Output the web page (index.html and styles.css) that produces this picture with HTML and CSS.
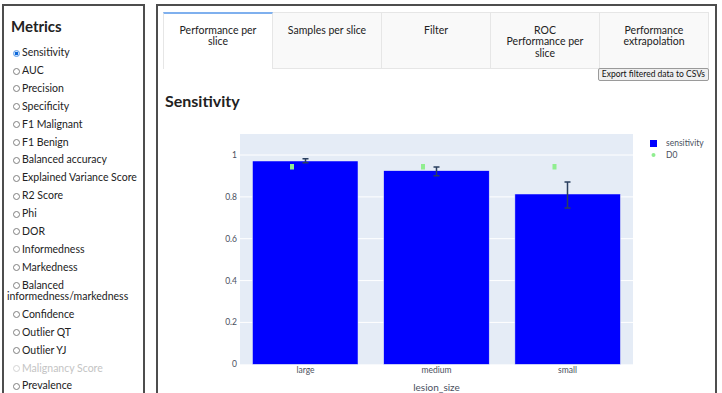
FILE: index.html
```html
<!DOCTYPE html>
<html lang="en">
<head>
    <meta charset="UTF-8">
    <meta name="viewport" content="width=device-width, initial-scale=1.0">
    <title>Slice performance</title>
    <link rel="stylesheet" href="styles.css">
</head>
<body>
    <div class="sidebar">
        <h2>Metrics</h2>
        <form class="metrics">
            <label><input type="radio" name="metric" checked>Sensitivity</label>
            <label><input type="radio" name="metric">AUC</label>
            <label><input type="radio" name="metric">Precision</label>
            <label><input type="radio" name="metric">Specificity</label>
            <label><input type="radio" name="metric">F1 Malignant</label>
            <label><input type="radio" name="metric">F1 Benign</label>
            <label><input type="radio" name="metric">Balanced accuracy</label>
            <label><input type="radio" name="metric">Explained Variance Score</label>
            <label><input type="radio" name="metric">R2 Score</label>
            <label><input type="radio" name="metric">Phi</label>
            <label><input type="radio" name="metric">DOR</label>
            <label><input type="radio" name="metric">Informedness</label>
            <label><input type="radio" name="metric">Markedness</label>
            <label><input type="radio" name="metric">Balanced informedness/markedness</label>
            <label><input type="radio" name="metric">Confidence</label>
            <label><input type="radio" name="metric">Outlier QT</label>
            <label><input type="radio" name="metric">Outlier YJ</label>
            <label class="disabled"><input type="radio" name="metric" disabled>Malignancy Score</label>
            <label><input type="radio" name="metric">Prevalence</label>
        </form>
    </div>

    <div class="main">
        <div class="tabs">
            <div class="tab selected">Performance per slice</div>
            <div class="tab">Samples per slice</div>
            <div class="tab">Filter</div>
            <div class="tab">ROC<br>Performance per slice</div>
            <div class="tab">Performance extrapolation</div>
        </div>
        <div class="export-row">
            <button type="button">Export filtered data to CSVs</button>
        </div>

        <h3>Sensitivity</h3>

        <!-- bar chart, drawn in page coordinates -->
        <svg class="chart" width="546" height="280" viewBox="163 118 546 280">
            <rect x="240" y="134" width="393" height="230.3" fill="#e5ecf6"/>
            <g stroke="#fff" stroke-width="1">
                <line x1="240" x2="633" y1="155" y2="155"/>
                <line x1="240" x2="633" y1="196.9" y2="196.9"/>
                <line x1="240" x2="633" y1="238.7" y2="238.7"/>
                <line x1="240" x2="633" y1="280.6" y2="280.6"/>
                <line x1="240" x2="633" y1="322.4" y2="322.4"/>
            </g>
            <g class="tick" text-anchor="end">
                <text x="237" y="155" dy=".35em">1</text>
                <text x="237" y="196.9" dy=".35em">0.8</text>
                <text x="237" y="238.7" dy=".35em">0.6</text>
                <text x="237" y="280.6" dy=".35em">0.4</text>
                <text x="237" y="322.4" dy=".35em">0.2</text>
                <text x="237" y="364.3" dy=".35em">0</text>
            </g>
            <g fill="#0000ff" stroke="#e5ecf6" stroke-width="0.5">
                <rect x="252.5" y="161" width="105.5" height="203.3"/>
                <rect x="383.7" y="170.7" width="105.5" height="193.6"/>
                <rect x="514.9" y="194" width="105.5" height="170.3"/>
            </g>
            <g stroke="#2a3f5f" stroke-width="1.5" fill="none">
                <path d="M305.5 158.7V162.7M302.5 158.7H308.5M302.5 162.7H308.5"/>
                <path d="M436.5 167V175.7M433.5 167H439.5M433.5 175.7H439.5"/>
                <path d="M567.5 182V208M564.5 182H570.5M564.5 208H570.5"/>
            </g>
            <g fill="#90ee90">
                <rect x="290" y="164" width="4" height="5.5"/>
                <rect x="421" y="164" width="4" height="5.5"/>
                <rect x="552.5" y="164" width="4" height="5.5"/>
            </g>
            <g class="tick" text-anchor="middle">
                <text x="305.5" y="370.5" dy=".35em">large</text>
                <text x="436.5" y="370.5" dy=".35em">medium</text>
                <text x="567.5" y="370.5" dy=".35em">small</text>
            </g>
            <text class="axis-title" x="436.5" y="387" dy=".35em" text-anchor="middle">lesion_size</text>
            <rect x="650" y="140" width="7" height="7" fill="#0000ff"/>
            <text class="tick" x="666" y="143.5" dy=".35em">sensitivity</text>
            <circle cx="653.5" cy="155" r="2" fill="#90ee90"/>
            <text class="tick" x="666" y="155" dy=".35em">D0</text>
        </svg>
    </div>
</body>
</html>
```

FILE: styles.css
```css
html, body {
    margin: 0;
    height: 100%;
    overflow: hidden;
}
body {
    font-family: Lato, "Open Sans", sans-serif;
    color: #222;
    background-color: #fff;
    display: flex;
    align-items: flex-start;
    gap: 11px;
    padding: 4px 0 0 2px;
    box-sizing: border-box;
}
.sidebar {
    width: 143px;
    min-height: 500px;
    border: 2px solid #4d4d4d;
    box-sizing: border-box;
    padding: 11px 3px 0 3px;
}
.sidebar h2 {
    font-size: 15px;
    font-weight: 700;
    line-height: 18px;
    margin: 0 0 9px 4px;
}
.metrics label {
    display: block;
    font-size: 10.5px;
    line-height: 11.5px;
    padding: 3.2px 0;
}
.metrics label.disabled {
    color: #c4c4c4;
}
.metrics input[type="radio"] {
    appearance: none;
    -webkit-appearance: none;
    width: 7px;
    height: 7px;
    margin: 0 2px 0 6px;
    border: 1px solid #808080;
    border-radius: 50%;
    box-sizing: border-box;
    vertical-align: -0.5px;
    background-color: #fff;
}
.metrics input[type="radio"]:checked {
    border-color: #5b9be8;
    background: radial-gradient(circle, #0b67d9 0 45%, #cfe2fa 55%);
}
.metrics input[type="radio"]:disabled {
    border-color: #d4d4d4;
}
.main {
    width: 561px;
    min-height: 500px;
    border: 2px solid #4d4d4d;
    box-sizing: border-box;
    padding: 6px 6px 0 5px;
}
.tabs {
    display: flex;
}
.tab {
    flex: 1;
    height: 57px;
    box-sizing: border-box;
    padding: 12px 12px 0;
    background-color: #f9f9f9;
    border: 1px solid #e6e6e6;
    border-left: none;
    text-align: center;
    font-size: 10.5px;
    line-height: 11.3px;
    color: #222;
}
.tab:first-child {
    border-left: 1px solid #e6e6e6;
}
.tab.selected {
    background-color: #fff;
    border-top: 2px solid #7fb0ee;
    border-bottom: none;
    padding-top: 11px;
}
.export-row {
    display: flex;
    justify-content: flex-end;
    margin-top: -1px;
}
button {
    font-family: inherit;
    font-size: 8.5px;
    line-height: 11px;
    height: 13px;
    padding: 0 3px;
    color: #111;
    background-color: #efefef;
    border: 1px solid #9a9a9a;
    border-radius: 2px;
}
.main h3 {
    font-size: 16px;
    font-weight: 700;
    line-height: 19px;
    margin: 10px 0 8px 2px;
}
.chart {
    display: block;
}
.tick {
    font-size: 8.5px;
    fill: #4a5060;
}
.axis-title {
    font-size: 10px;
    fill: #4a5060;
}
```
